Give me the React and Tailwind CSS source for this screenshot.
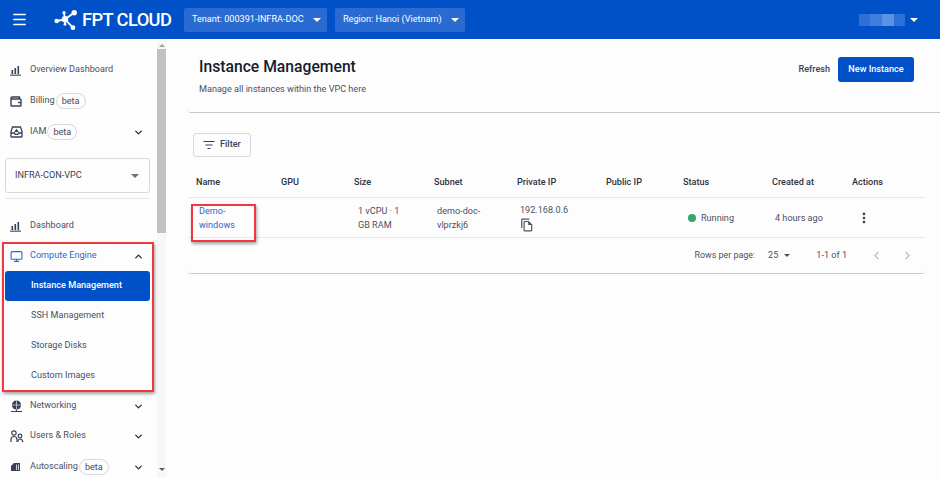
import React from "react";
import { Menu, ChevronDown, ChevronUp, ChevronLeft, ChevronRight, MoreVertical, Monitor } from "lucide-react";

const Caret = ({ className = "" }) => (
  <span className={`inline-block w-0 h-0 border-l-[4px] border-r-[4px] border-t-[4px] border-l-transparent border-r-transparent ${className}`} />
);

const Beta = () => (
  <span className="ml-[1px] h-[16px] px-[5px] rounded-full border border-[#d8d8de] text-[9.1px] leading-[14px] text-[#444a5c]">beta</span>
);

const Bars = () => (
  <svg width="11" height="11" viewBox="0 0 11 11" fill="#3a4154"><rect x="1.5" y="5" width="1.6" height="4" /><rect x="4.5" y="3" width="1.6" height="6" /><rect x="7.5" y="1" width="1.6" height="8" /><rect x="0" y="9.6" width="11" height="1.1" /></svg>
);

const WalletIcon = () => (
  <svg width="12" height="11" viewBox="0 0 12 11" fill="none" stroke="#3a4154" strokeWidth="1.4"><path d="M1 2.5V9.2A.8.8 0 0 0 1.8 10H10.2A.8.8 0 0 0 11 9.2V3.8A.8.8 0 0 0 10.2 3H1.8A.8.8 0 0 1 1 2.2 1 1 0 0 1 2 1H9.5V3" /><path d="M8 6.5H11" /></svg>
);

const IamIcon = () => (
  <svg width="13" height="12" viewBox="0 0 13 12" fill="none" stroke="#3a4154" strokeWidth="1.3"><path d="M2.5 1H10.5L12 5.5V10.5A.5.5 0 0 1 11.5 11H1.5A.5.5 0 0 1 1 10.5V5.5Z" /><path d="M1 7H4.5L5.2 8.3H7.8L8.5 7H12" /><path d="M4.2 6L6.5 2.8 8.8 6Z" fill="#3a4154" stroke="none" /></svg>
);

const NetIcon = () => (
  <svg width="13" height="13" viewBox="0 0 13 13" fill="#3a4154"><circle cx="6.5" cy="5" r="4.6" /><path d="M2 5H11M6.5 .5V9.5" stroke="#fdfdfe" strokeWidth=".6" /><path d="M6 9.5H7V11H6ZM1 11H12V12H1Z" /></svg>
);

const UsersIcon = () => (
  <svg width="14" height="13" viewBox="0 0 14 13" fill="none" stroke="#3a4154" strokeWidth="1.2"><circle cx="4" cy="3" r="2.2" /><path d="M1 12V9.5C1 7.5 2.5 6.5 4 6.5S7 7.5 7 9.5V12" /><circle cx="10" cy="6" r="1.8" /><path d="M7.8 12C8 10 8.8 9 10 9S12.4 10 13 12" /></svg>
);

const ScaleIcon = () => (
  <svg width="11" height="10" viewBox="0 0 11 10" fill="#3a4154"><path d="M4 1H10V9H1V4Z" /><path d="M6 2.5H6.8V8H6ZM8 2.5H8.8V8H8Z" fill="#fdfdfe" /></svg>
);

const CopyIcon = () => (
  <svg width="14" height="14" viewBox="0 0 24 24" fill="#4a5064"><path d="M16 1H4c-1.1 0-2 .9-2 2v14h2V3h12V1zm-1 4H8c-1.1 0-1.99.9-1.99 2L6 21c0 1.1.89 2 1.99 2H19c1.1 0 2-.9 2-2V11l-6-6zM8 21V7h6v5h5v9H8z" /></svg>
);

const Logo = () => (
  <svg width="24" height="22" viewBox="0 0 24 22" fill="none" stroke="white" strokeWidth="1.8">
    <path d="M2.7 12 L11 10.3 L20 3.7 M11 10.3 L19 18.7 M11 10.3 L10 3.7 M11 10.3 V15.3" />
    <circle cx="2.7" cy="12" r="2.3" fill="white" stroke="none" />
    <circle cx="11" cy="10.3" r="3.2" fill="white" stroke="none" />
    <circle cx="20.2" cy="3.7" r="2.7" fill="white" stroke="none" />
    <circle cx="19" cy="18.7" r="2.4" fill="white" stroke="none" />
    <circle cx="10" cy="3.7" r="1.6" fill="white" stroke="none" />
    <circle cx="11" cy="15.3" r="1.4" fill="white" stroke="none" />
  </svg>
);

const NavItem = ({ icon, label, beta, chevron, active }) => (
  <div className={`h-[30px] flex items-center pl-[10px] pr-[13px] ${active ? "text-[#2f66c9]" : "text-[#4a5064]"}`}>
    <span className="w-[20px] flex items-center shrink-0">{icon}</span>
    <span className="text-[9.1px] whitespace-nowrap">{label}</span>
    {beta && <Beta />}
    <span className="flex-1" />
    {chevron === "down" && <ChevronDown size={11} strokeWidth={3} className="text-[#2b3245]" />}
    {chevron === "up" && <ChevronUp size={11} strokeWidth={3} className="text-[#2b3245]" />}
  </div>
);

const SubItem = ({ label, active }) => (
  <div className={`h-[30px] ml-[5px] mr-[7px] pl-[26px] flex items-center rounded-[3px] text-[9.1px] ${active ? "bg-[#0050c8] text-white font-medium" : "text-[#4a5064]"}`}>{label}</div>
);

const cols = "grid grid-cols-[85px_73px_80px_83px_89px_77px_89px_80px_1fr] pl-[8px]";

export default function App() {
  return (
    <div className="w-[940px] h-[478px] overflow-hidden flex flex-col bg-[#fdfdfe] font-['Roboto',sans-serif] relative">
      <header className="h-[39px] shrink-0 bg-[#0050c8] flex items-center text-white">
        <Menu size={17} strokeWidth={2.2} className="ml-[11px]" />
        <div className="ml-[26px] flex items-center w-[127px]">
          <Logo />
          <span className="ml-[4px] text-[18.3px] font-medium tracking-[-0.6px] whitespace-nowrap">FPT CLOUD</span>
        </div>
        <div className="ml-[3px] w-[143px] h-[24px] rounded-[2px] bg-[#2a6bd2] flex items-center pl-[8px] pr-[3px] text-[9.1px] whitespace-nowrap">
          <span>Tenant: 000391-INFRA-DOC</span><span className="flex-1" /><Caret className="border-t-white mr-[3px]" />
        </div>
        <div className="ml-[8px] w-[130px] h-[24px] rounded-[2px] bg-[#2a6bd2] flex items-center pl-[8px] pr-[3px] text-[9.1px] whitespace-nowrap">
          <span>Region: Hanoi (Vietnam)</span><span className="flex-1" /><Caret className="border-t-white mr-[3px]" />
        </div>
        <span className="flex-1" />
        <div className="flex items-center mr-[22px]">
          <div className="flex h-[12px]">
            <span className="w-[11px] bg-[#2d6fd6]" /><span className="w-[12px] bg-[#3f7ddc]" /><span className="w-[12px] bg-[#5a92e6]" /><span className="w-[11px] bg-[#2d6fd6]" />
          </div>
          <Caret className="ml-[5px] border-t-white" />
        </div>
      </header>

      <div className="flex flex-1 min-h-0">
        <aside className="w-[166px] shrink-0 flex relative overflow-hidden">
          <div className="w-[157px] shrink-0 pt-[16px]">
            <NavItem icon={<Bars />} label="Overview Dashboard" />
            <div className="h-[1px]" />
            <NavItem icon={<WalletIcon />} label="Billing" beta />
            <div className="h-[1px]" />
            <NavItem icon={<IamIcon />} label="IAM" beta chevron="down" />
            <div className="ml-[5px] mr-[7px] mt-[11px] h-[35px] rounded-[3px] border border-[#d8d8de] flex items-center pl-[9px] pr-[10px] text-[9.1px] text-[#3a4154]">
              <span>INFRA-CON-VPC</span><span className="flex-1" /><Caret className="border-t-[#6b6f7c]" />
            </div>
            <div className="ml-[5px] mr-[7px] mt-[5px] mb-[12px] h-[1px] bg-[#e8e8ec]" />
            <NavItem icon={<Bars />} label="Dashboard" />
            <NavItem icon={<Monitor size={13} strokeWidth={2} className="text-[#2f66c9]" />} label="Compute Engine" chevron="up" active />
            <SubItem label="Instance Management" active />
            <SubItem label="SSH Management" />
            <SubItem label="Storage Disks" />
            <SubItem label="Custom Images" />
            <NavItem icon={<NetIcon />} label="Networking" chevron="down" />
            <NavItem icon={<UsersIcon />} label="Users & Roles" chevron="down" />
            <div className="h-[1px]" />
            <NavItem icon={<ScaleIcon />} label="Autoscaling" beta chevron="down" />
          </div>
          <div className="w-[9px] shrink-0 flex flex-col items-center bg-[#f7f7f8]">
            <span className="mt-[5px] w-0 h-0 border-l-[3px] border-r-[3px] border-b-[3px] border-l-transparent border-r-transparent border-b-[#a0a0a0]" />
            <div className="mt-[2px] w-full h-[184px] bg-[#c1c1c1]" />
            <span className="flex-1" />
            <span className="mb-[7px] w-0 h-0 border-l-[3px] border-r-[3px] border-t-[3px] border-l-transparent border-r-transparent border-t-[#606060]" />
          </div>
        </aside>

        <main className="flex-1 min-w-0 pl-[22px]">
          <div className="h-[74px] border-b border-[#c9c9cd] rounded-bl-[3px] relative flex items-start pl-[11px] pr-[26px]">
            <div className="pt-[18px]">
              <h1 className="text-[15.7px] leading-[20px] font-medium text-[#171b2e]">Instance Management</h1>
              <p className="mt-[5px] text-[9.1px] leading-[14px] text-[#4a5064]">Manage all instances within the VPC here</p>
            </div>
            <span className="flex-1" />
            <div className="flex items-center pt-[18px]">
              <span className="text-[9.1px] font-medium text-[#3a4154]">Refresh</span>
              <span className="ml-[8px] w-[76px] h-[25px] rounded-[3px] bg-[#0050c8] text-white text-[9.1px] font-medium flex items-center justify-center">New Instance</span>
            </div>
          </div>

          <div className="mt-[20px] w-[737px] h-[141px] border-b border-[#c9c9cd] rounded-b-[3px]">
            <div className="ml-[5px] w-[58px] h-[24px] rounded-[3px] border border-[#d8d8de] flex items-center pl-[9px] text-[9.1px] font-medium text-[#3a4154]">
              <svg width="12" height="10" viewBox="0 0 12 10" stroke="#3a4154" strokeWidth="1.2"><path d="M0.5 1.5H11.5M2.5 5H9.5M4.5 8.5H7.5" /></svg>
              <span className="ml-[5px]">Filter</span>
            </div>
            <div className={`${cols} h-[41px] pt-[11px] items-center border-b border-[#e8e8ec] text-[9.1px] font-medium text-[#2b3245]`}>
              <span>Name</span><span>GPU</span><span>Size</span><span>Subnet</span><span>Private IP</span><span>Public IP</span><span>Status</span><span>Created at</span><span>Actions</span>
            </div>
            <div className={`${cols} h-[40px] items-center border-b border-[#e8e8ec] text-[9.1px] leading-[14px] text-[#4a5064]`}>
              <span className="pl-[3px] text-[#2f66c9]">Demo-<br />windows</span>
              <span />
              <span className="pl-[4px]">1 vCPU · 1<br />GB RAM</span>
              <span className="pl-[3px]">demo-doc-<br />vlprzkj6</span>
              <div className="pl-[3px] flex flex-col items-start">
                <span>192.168.0.6</span>
                <span className="mt-[1px]"><CopyIcon /></span>
              </div>
              <span />
              <div className="pl-[5px] flex items-center">
                <span className="w-[8px] h-[8px] rounded-full bg-[#36a56f]" />
                <span className="ml-[5px]">Running</span>
              </div>
              <span className="pl-[3px]">4 hours ago</span>
              <MoreVertical size={14} strokeWidth={2.6} className="ml-[5px] text-[#3a4154]" />
            </div>
            <div className="h-[35px] flex items-center justify-end text-[9.1px] text-[#4a5064] pr-[11px]">
              <span className="text-[8.9px]">Rows per page:</span>
              <span className="ml-[13px]">25</span>
              <span className="ml-[6px] inline-block w-0 h-0 border-l-[3px] border-r-[3px] border-t-[3px] border-l-transparent border-r-transparent border-t-[#4a5064]" />
              <span className="ml-[26px]">1-1 of 1</span>
              <ChevronLeft size={13} className="ml-[23px] text-[#b9bcc4]" />
              <ChevronRight size={13} className="ml-[18px] text-[#b9bcc4]" />
            </div>
          </div>
        </main>
      </div>

      <div className="absolute left-[2px] top-[242px] w-[152px] h-[150px] border-2 border-[#ee3a3f] shadow-[1px_2px_3px_rgba(0,0,0,0.35)]" />
      <div className="absolute left-[191px] top-[204px] w-[65px] h-[38px] border-2 border-[#ee3a3f] shadow-[1px_2px_3px_rgba(0,0,0,0.35)]" />
    </div>
  );
}
